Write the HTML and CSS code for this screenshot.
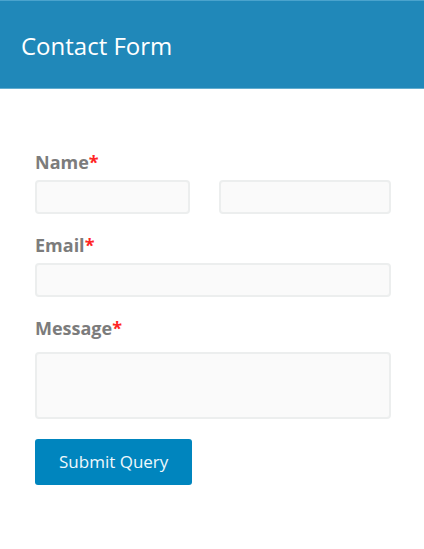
FILE: index.html
```html
<!DOCTYPE html>
<html lang="en">
<head>
<meta charset="utf-8">
<meta name="viewport" content="width=device-width, initial-scale=1">
<title>Contact Form</title>
<link rel="stylesheet" href="styles.css">
</head>
<body>
<header class="banner"><h1 class="title">Contact Form</h1></header>
<form class="form">
  <div class="field">
    <label class="label" for="first-name">Name<span class="required">*</span></label>
    <div class="name-row">
      <input class="control" id="first-name" type="text" required>
      <input class="control" id="last-name" type="text" aria-label="Last name" required>
    </div>
  </div>
  <div class="field">
    <label class="label" for="email">Email<span class="required">*</span></label>
    <input class="control" id="email" type="email" required>
  </div>
  <div class="field field-message">
    <label class="label" for="message">Message<span class="required">*</span></label>
    <textarea class="control message" id="message" required></textarea>
  </div>
  <button class="submit" type="submit">Submit Query</button>
</form>
</body>
</html>
```
FILE: styles.css
```css
* {
  box-sizing: border-box;
}

body {
  margin: 0;
  background: #fff;
  font-family: "Open Sans", sans-serif;
}

.banner {
  padding: 27px 21px 24px;
  border-top: 1px solid #4aa3cd;
  border-bottom: 1px solid #62adcf;
  background: #2088b9;
}

.title {
  margin: 0;
  color: #fff;
  font-size: 24px;
  font-weight: 400;
  line-height: 36px;
}

.form {
  padding: 62px 33px 62px 35px;
}

.field {
  display: flex;
  flex-direction: column;
  gap: 6px;
  margin-bottom: 20px;
}

.field-message {
  gap: 12px;
}

.label {
  color: #7c7c7c;
  font-size: 18px;
  font-weight: 700;
  line-height: 23px;
}

.required {
  color: #ff2424;
}

.name-row {
  display: grid;
  grid-template-columns: 9fr 10fr;
  gap: 29px;
}

.control {
  display: block;
  width: 100%;
  height: 34px;
  margin: 0;
  padding: 4px 8px;
  border: 2px solid #eceeee;
  border-radius: 4px;
  background: #fafafa;
  color: #555;
  font: 16px "Open Sans", sans-serif;
}

.message {
  height: 67px;
  resize: none;
}

.submit {
  height: 46px;
  padding: 0 24px 2px;
  border: 0;
  border-radius: 3px;
  background: #0085be;
  color: #eef8fc;
  font: 17px "Open Sans", sans-serif;
}
```
